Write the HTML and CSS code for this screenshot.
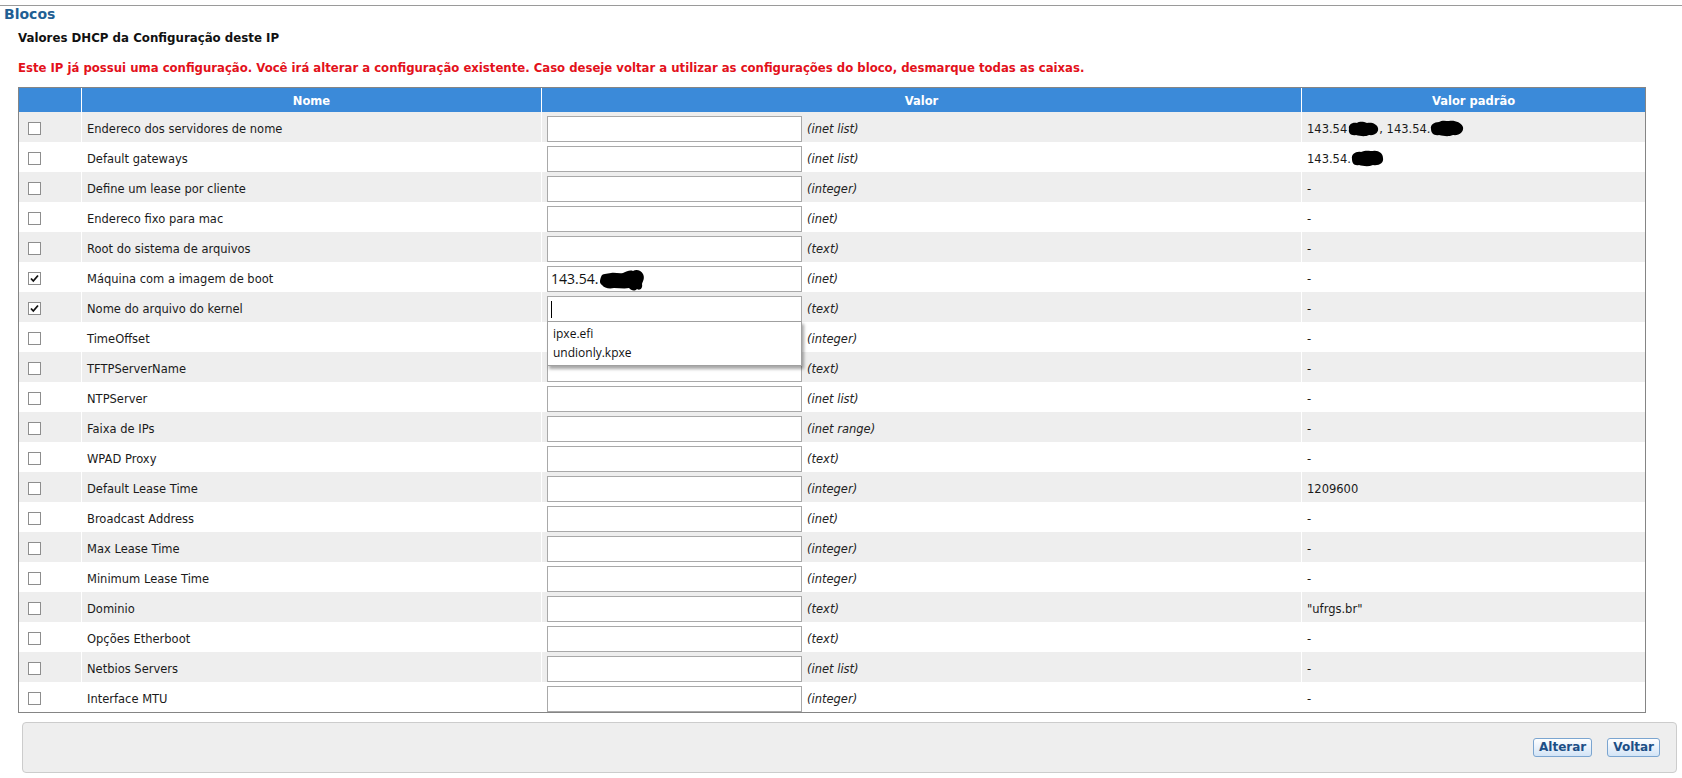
FILE: index.html
```html
<!DOCTYPE html>
<html lang="pt-BR">
<head>
<meta charset="utf-8">
<title>Blocos</title>
<link rel="stylesheet" href="styles.css">
</head>
<body>
<div class="topline"></div>
<h1 class="page-title">Blocos</h1>
<h2 class="section-title">Valores DHCP da Configuração deste IP</h2>
<p class="warning">Este IP já possui uma configuração. Você irá alterar a configuração existente. Caso deseje voltar a utilizar as configurações do bloco, desmarque todas as caixas.</p>

<table class="grid">
  <colgroup>
    <col class="c-check">
    <col class="c-name">
    <col class="c-value">
    <col class="c-default">
  </colgroup>
  <thead>
    <tr><th></th><th>Nome</th><th>Valor</th><th>Valor padrão</th></tr>
  </thead>
  <tbody>
    <tr>
      <td class="cb-cell"><span class="cb"></span></td>
      <td>Endereco dos servidores de nome</td>
      <td><span class="field"><input class="txt" type="text"></span><em class="type">(inet list)</em></td>
      <td>143.54<svg class="blob" width="32" height="16" viewBox="0 0 32 16"><path d="M2 8 C1 4 5 1 10 2 C13 0 17 1 20 2 C25 1 30 3 31 7 C32 11 28 15 22 14 C18 16 13 15 9 14 C4 15 1 12 2 8 Z"/></svg>, 143.54.<svg class="blob" width="34" height="17" viewBox="0 0 34 17"><path d="M1 9 C0 5 4 2 9 2 C12 0 16 1 19 1 C24 0 31 2 33 7 C34 12 29 16 23 15 C18 17 14 16 9 15 C4 16 1 13 1 9 Z"/></svg></td>
    </tr>
    <tr>
      <td class="cb-cell"><span class="cb"></span></td>
      <td>Default gateways</td>
      <td><span class="field"><input class="txt" type="text"></span><em class="type">(inet list)</em></td>
      <td>143.54.<svg class="blob" width="33" height="17" viewBox="0 0 33 17"><path d="M1 9 C0 4 5 1 10 2 C14 0 19 1 22 1 C27 0 32 3 32 8 C33 13 28 16 22 15 C17 17 12 16 8 15 C3 16 1 13 1 9 Z"/></svg></td>
    </tr>
    <tr>
      <td class="cb-cell"><span class="cb"></span></td>
      <td>Define um lease por cliente</td>
      <td><span class="field"><input class="txt" type="text"></span><em class="type">(integer)</em></td>
      <td>-</td>
    </tr>
    <tr>
      <td class="cb-cell"><span class="cb"></span></td>
      <td>Endereco fixo para mac</td>
      <td><span class="field"><input class="txt" type="text"></span><em class="type">(inet)</em></td>
      <td>-</td>
    </tr>
    <tr>
      <td class="cb-cell"><span class="cb"></span></td>
      <td>Root do sistema de arquivos</td>
      <td><span class="field"><input class="txt" type="text"></span><em class="type">(text)</em></td>
      <td>-</td>
    </tr>
    <tr>
      <td class="cb-cell"><span class="cb checked"><svg width="11" height="11" viewBox="0 0 11 11"><path d="M2 5.5 L4.3 8 L9 2.5" fill="none" stroke="#111" stroke-width="1.8"/></svg></span></td>
      <td>Máquina com a imagem de boot</td>
      <td><span class="field"><input class="txt filled" type="text" value="143.54."><svg class="redact" width="46" height="23" viewBox="0 0 46 23"><path d="M2 8 C3 4 8 5 12 4 C16 3 20 5 24 4 C28 2 31 1 34 2 C37 0 42 1 44 5 C46 9 44 12 43 15 C44 19 41 22 38 20 C35 23 32 21 30 19 C26 20 20 19 15 19 C10 20 5 19 3 16 C0 14 1 11 2 8 Z"/></svg></span><em class="type">(inet)</em></td>
      <td>-</td>
    </tr>
    <tr>
      <td class="cb-cell"><span class="cb checked"><svg width="11" height="11" viewBox="0 0 11 11"><path d="M2 5.5 L4.3 8 L9 2.5" fill="none" stroke="#111" stroke-width="1.8"/></svg></span></td>
      <td>Nome do arquivo do kernel</td>
      <td class="has-menu"><span class="field"><input class="txt" type="text"><span class="caret"></span></span><em class="type">(text)</em>
        <ul class="suggest">
          <li>ipxe.efi</li>
          <li>undionly.kpxe</li>
        </ul>
      </td>
      <td>-</td>
    </tr>
    <tr>
      <td class="cb-cell"><span class="cb"></span></td>
      <td>TimeOffset</td>
      <td><span class="field"><input class="txt" type="text"></span><em class="type">(integer)</em></td>
      <td>-</td>
    </tr>
    <tr>
      <td class="cb-cell"><span class="cb"></span></td>
      <td>TFTPServerName</td>
      <td><span class="field"><input class="txt" type="text"></span><em class="type">(text)</em></td>
      <td>-</td>
    </tr>
    <tr>
      <td class="cb-cell"><span class="cb"></span></td>
      <td>NTPServer</td>
      <td><span class="field"><input class="txt" type="text"></span><em class="type">(inet list)</em></td>
      <td>-</td>
    </tr>
    <tr>
      <td class="cb-cell"><span class="cb"></span></td>
      <td>Faixa de IPs</td>
      <td><span class="field"><input class="txt" type="text"></span><em class="type">(inet range)</em></td>
      <td>-</td>
    </tr>
    <tr>
      <td class="cb-cell"><span class="cb"></span></td>
      <td>WPAD Proxy</td>
      <td><span class="field"><input class="txt" type="text"></span><em class="type">(text)</em></td>
      <td>-</td>
    </tr>
    <tr>
      <td class="cb-cell"><span class="cb"></span></td>
      <td>Default Lease Time</td>
      <td><span class="field"><input class="txt" type="text"></span><em class="type">(integer)</em></td>
      <td>1209600</td>
    </tr>
    <tr>
      <td class="cb-cell"><span class="cb"></span></td>
      <td>Broadcast Address</td>
      <td><span class="field"><input class="txt" type="text"></span><em class="type">(inet)</em></td>
      <td>-</td>
    </tr>
    <tr>
      <td class="cb-cell"><span class="cb"></span></td>
      <td>Max Lease Time</td>
      <td><span class="field"><input class="txt" type="text"></span><em class="type">(integer)</em></td>
      <td>-</td>
    </tr>
    <tr>
      <td class="cb-cell"><span class="cb"></span></td>
      <td>Minimum Lease Time</td>
      <td><span class="field"><input class="txt" type="text"></span><em class="type">(integer)</em></td>
      <td>-</td>
    </tr>
    <tr>
      <td class="cb-cell"><span class="cb"></span></td>
      <td>Dominio</td>
      <td><span class="field"><input class="txt" type="text"></span><em class="type">(text)</em></td>
      <td>"ufrgs.br"</td>
    </tr>
    <tr>
      <td class="cb-cell"><span class="cb"></span></td>
      <td>Opções Etherboot</td>
      <td><span class="field"><input class="txt" type="text"></span><em class="type">(text)</em></td>
      <td>-</td>
    </tr>
    <tr>
      <td class="cb-cell"><span class="cb"></span></td>
      <td>Netbios Servers</td>
      <td><span class="field"><input class="txt" type="text"></span><em class="type">(inet list)</em></td>
      <td>-</td>
    </tr>
    <tr>
      <td class="cb-cell"><span class="cb"></span></td>
      <td>Interface MTU</td>
      <td><span class="field"><input class="txt" type="text"></span><em class="type">(integer)</em></td>
      <td>-</td>
    </tr>
  </tbody>
</table>

<div class="actions">
  <button class="btn" type="button">Alterar</button>
  <button class="btn" type="button">Voltar</button>
</div>
</body>
</html>
```
FILE: styles.css
```css
* { box-sizing: border-box; }

body {
  margin: 0;
  font-family: "DejaVu Sans", Verdana, sans-serif;
  font-size: 11.5px;
  color: #1a1a1a;
  background: #fff;
}

.topline {
  height: 6px;
  border-bottom: 1px solid #9a9a9a;
}

.page-title {
  margin: 0;
  padding-left: 4px;
  font-size: 14px;
  line-height: 17px;
  font-weight: bold;
  color: #1f5f94;
}

.section-title {
  margin: 8px 0 0 18px;
  font-size: 11.8px;
  line-height: 14px;
  font-weight: bold;
  color: #111;
}

.warning {
  margin: 16px 0 0 18px;
  font-size: 11.7px;
  line-height: 14px;
  font-weight: bold;
  color: #e3111b;
}

.grid {
  margin: 12px 0 0 18px;
  width: 1628px;
  table-layout: fixed;
  border-collapse: separate;
  border-spacing: 0;
  border: 1px solid #858585;
}

.c-check { width: 62px; }
.c-name { width: 460px; }
.c-value { width: 760px; }
.c-default { width: 344px; }

.grid th {
  height: 24px;
  padding: 1px 5px 0;
  background: #3b8ad9;
  color: #fff;
  font-weight: bold;
  font-size: 11.5px;
  text-align: center;
  vertical-align: middle;
}

.grid th + th,
.grid td + td {
  border-left: 1px solid #fff;
}

.grid td {
  height: 30px;
  padding: 3px 5px 0;
  vertical-align: middle;
  white-space: nowrap;
}

.grid tbody tr:nth-child(odd) td { background: #eeeeee; }
.grid tbody tr:nth-child(even) td { background: #ffffff; }

.grid td.cb-cell { padding-left: 9px; }

.cb {
  display: block;
  width: 13px;
  height: 13px;
  border: 1px solid #8e8e8e;
  background: #fff;
  position: relative;
}

.cb svg {
  display: block;
  position: absolute;
  left: 0;
  top: 0;
}

.field {
  position: relative;
  display: inline-block;
  vertical-align: middle;
}

.txt {
  display: block;
  width: 255px;
  height: 26px;
  margin: 0;
  padding: 0 3px;
  border: 1px solid #a9a9a9;
  border-radius: 0;
  background: #fff;
  font-family: "Open Sans", "Noto Sans", sans-serif;
  font-size: 14px;
  color: #111;
  outline: none;
}

.redact {
  position: absolute;
  left: 52px;
  top: 3px;
  fill: #000;
}

.caret {
  position: absolute;
  left: 4px;
  top: 5px;
  width: 1px;
  height: 17px;
  background: #000;
}

.blob {
  vertical-align: middle;
  fill: #000;
  margin: -4px 0 -3px 0;
}

.type {
  display: inline-block;
  vertical-align: middle;
  margin-left: 5px;
  font-style: italic;
  color: #222;
}

.has-menu { position: relative; }

.suggest {
  position: absolute;
  left: 5px;
  top: 29px;
  z-index: 5;
  width: 255px;
  margin: 0;
  padding: 2px 0 3px;
  list-style: none;
  background: #fff;
  border: 1px solid #a0a0a0;
  box-shadow: 2px 3px 3px rgba(0, 0, 0, 0.35);
  font-family: "Open Sans", "Noto Sans", sans-serif;
  font-size: 12px;
  color: #111;
}

.suggest li {
  height: 19px;
  line-height: 19px;
  padding: 0 5px;
}

.actions {
  display: flex;
  justify-content: flex-end;
  align-items: center;
  gap: 15px;
  height: 51px;
  margin: 9px 5px 0 22px;
  padding: 0 16px 0 0;
  background: #eeeeee;
  border: 1px solid #cccccc;
  border-radius: 4px;
}

.btn {
  height: 19px;
  padding: 0 5px;
  font-family: "DejaVu Sans", Verdana, sans-serif;
  font-size: 12px;
  font-weight: bold;
  line-height: 17px;
  color: #1d4f86;
  background: linear-gradient(#ffffff, #d3e4f6);
  border: 1px solid #7ba5d0;
  border-radius: 3px;
}
```
